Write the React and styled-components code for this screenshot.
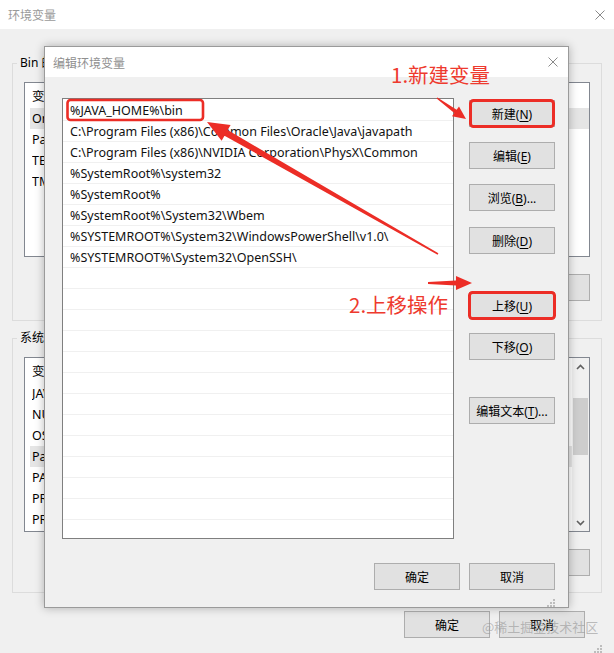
import React from 'react';
import styled, { createGlobalStyle } from 'styled-components';

const GlobalStyle = createGlobalStyle`
  html, body { margin: 0; padding: 0; }
  body {
    background: #f0f0f0;
    font-family: "Noto Sans", "Noto Sans CJK SC", sans-serif;
    font-size: 12px;
    color: #000;
  }
  * { box-sizing: border-box; }
`;

const Page = styled.div`
  position: relative;
  width: 614px;
  height: 653px;
  overflow: hidden;
`;

/* ---------- background window ---------- */
const Window = styled.div`
  width: 614px;
  height: 653px;
  background: #f0f0f0;
  display: flex;
  flex-direction: column;
`;

const TitleBar = styled.div`
  height: ${(p) => p.$h}px;
  flex: none;
  background: #fff;
  display: flex;
  align-items: center;
  padding-left: 8px;
  color: ${(p) => p.$color};
  font-family: "Noto Sans CJK SC", sans-serif;
  font-size: 12px;
`;

const TitleText = styled.span`
  flex: 1;
`;

const CloseBtn = styled.div`
  width: ${(p) => p.$w}px;
  height: 100%;
  display: flex;
  align-items: center;
  justify-content: center;
`;

const WinBody = styled.div`
  flex: 1;
  display: flex;
  flex-direction: column;
  padding: 27px 12px 0 12px;
`;

const GroupBox = styled.fieldset`
  margin: ${(p) => p.$mt}px 0 0 0;
  border: 1px solid #dcdcdc;
  padding: 12px 11px ${(p) => p.$pb}px 11px;
  min-width: 0;
`;

const Legend = styled.legend`
  padding: 0 3px;
  margin-left: -7px;
  font-size: 12px;
  line-height: 14px;
  font-family: "Noto Sans", "Noto Sans CJK SC", sans-serif;
`;

const ListView = styled.div`
  height: ${(p) => p.$h}px;
  background: #fff;
  border: 1px solid #828790;
  display: flex;
  overflow: hidden;
`;

const ListContent = styled.div`
  flex: 1;
  display: flex;
  flex-direction: column;
  font-size: 12.5px;
`;

const ListHeader = styled.div`
  height: 25px;
  flex: none;
  display: flex;
  align-items: center;
`;

const HeaderCell = styled.div`
  width: ${(p) => p.$w}px;
  padding-left: 7px;
`;

const ListRow = styled.div`
  height: 21px;
  flex: none;
  display: flex;
  align-items: center;
  margin-left: 5px;
  padding-left: 2px;
  background: ${(p) => (p.$selected ? '#e5e5e5' : 'transparent')};
`;

const Cell = styled.div`
  width: ${(p) => p.$w}px;
  white-space: nowrap;
  overflow: hidden;
`;

const ScrollBar = styled.div`
  width: 17px;
  flex: none;
  background: #f0f0f0;
  display: flex;
  flex-direction: column;
  align-items: center;
`;

const ScrollArrow = styled.div`
  height: 17px;
  width: 17px;
  display: flex;
  align-items: center;
  justify-content: center;
  margin-top: ${(p) => (p.$end ? 'auto' : '0')};
`;

const Thumb = styled.div`
  width: 15px;
  height: ${(p) => p.$h}px;
  margin-top: ${(p) => p.$top}px;
  background: #cdcdcd;
`;

const ButtonRow = styled.div`
  display: flex;
  justify-content: flex-end;
  gap: ${(p) => p.$gap}px;
  margin-top: ${(p) => p.$mt}px;
  padding-right: ${(p) => p.$pr || 0}px;
`;

const Btn = styled.button`
  width: 86px;
  height: 27px;
  margin: ${(p) => p.$mt || 0}px 0 0 0;
  padding: 0;
  flex: none;
  background: #e1e1e1;
  border: 1px solid #adadad;
  border-radius: 0;
  font-family: "Noto Sans", "Noto Sans CJK SC", sans-serif;
  font-size: 12px;
  color: #000;
  white-space: nowrap;
`;

const Mn = styled.span`
  text-decoration: underline;
  text-underline-offset: 2px;
`;

const GripRow = styled.div`
  margin-top: auto;
  display: flex;
  justify-content: flex-end;
  padding: 0 ${(p) => p.$pr}px ${(p) => p.$pb}px 0;
`;

/* ---------- dialog ---------- */
const Dialog = styled.div`
  position: absolute;
  left: 44px;
  top: 46px;
  width: 525px;
  height: 562px;
  border: 1px solid #9a9a9a;
  box-shadow: 0 0 9px rgba(0, 0, 0, 0.28);
  background: #f0f0f0;
  display: flex;
  flex-direction: column;
`;

const DialogBody = styled.div`
  flex: 1;
  display: flex;
  flex-direction: column;
  padding: 21px 13px 0 17px;
`;

const MainRow = styled.div`
  display: flex;
  gap: 15px;
  height: 441px;
`;

const PathList = styled.div`
  width: 392px;
  height: 441px;
  background: #fff;
  border: 1px solid #7f7f7f;
  padding-top: 1px;
  overflow: hidden;
`;

const PathRow = styled.div`
  height: 21px;
  border-bottom: 1px solid #f0f0f0;
  padding-left: 7px;
  line-height: 21px;
  white-space: nowrap;
  font-size: 12.5px;
  color: #111;
`;

const ButtonColumn = styled.div`
  width: 86px;
  display: flex;
  flex-direction: column;
  padding-top: 2px;
`;

/* ---------- annotations ---------- */
const Overlay = styled.svg`
  position: absolute;
  left: 0;
  top: 0;
  pointer-events: none;
`;

const Note = styled.span`
  position: absolute;
  left: ${(p) => p.$x}px;
  top: ${(p) => p.$y}px;
  font-family: "Noto Sans CJK SC", sans-serif;
  font-size: 20.5px;
  line-height: 24px;
  color: #ee3a2e;
  white-space: nowrap;
`;

const Watermark = styled.span`
  position: absolute;
  left: 482px;
  top: 617px;
  font-family: "Noto Sans CJK SC", sans-serif;
  font-size: 13px;
  line-height: 20px;
  color: rgba(150, 150, 150, 0.6);
  white-space: nowrap;
`;

const RED = '#ec2d26';

function arrowPoints([x1, y1], [x2, y2], headLen, headHalf, tailW, neckW) {
  const dx = x2 - x1;
  const dy = y2 - y1;
  const L = Math.hypot(dx, dy);
  const ux = dx / L;
  const uy = dy / L;
  const nx = -uy;
  const ny = ux;
  const bx = x2 - ux * headLen;
  const by = y2 - uy * headLen;
  const p = (x, y) => `${x.toFixed(1)},${y.toFixed(1)}`;
  return [
    p(x1 + (nx * tailW) / 2, y1 + (ny * tailW) / 2),
    p(bx + (nx * neckW) / 2, by + (ny * neckW) / 2),
    p(bx + nx * headHalf, by + ny * headHalf),
    p(x2, y2),
    p(bx - nx * headHalf, by - ny * headHalf),
    p(bx - (nx * neckW) / 2, by - (ny * neckW) / 2),
    p(x1 - (nx * tailW) / 2, y1 - (ny * tailW) / 2),
  ].join(' ');
}

const XIcon = ({ size = 10, color = '#777' }) => (
  <svg width={size} height={size} viewBox="0 0 10 10">
    <path d="M0.5 0.5 L9.5 9.5 M9.5 0.5 L0.5 9.5" stroke={color} strokeWidth="1" fill="none" />
  </svg>
);

const Chevron = ({ up }) => (
  <svg width="9" height="6" viewBox="0 0 9 6">
    <path
      d={up ? 'M1 5 L4.5 1.5 L8 5' : 'M1 1 L4.5 4.5 L8 1'}
      stroke="#606060"
      strokeWidth="1.6"
      fill="none"
    />
  </svg>
);

const Grip = () => (
  <svg width="8" height="8" viewBox="0 0 8 8">
    {[
      [6, 0],
      [3, 3],
      [6, 3],
      [0, 6],
      [3, 6],
      [6, 6],
    ].map(([x, y]) => (
      <rect key={`${x}-${y}`} x={x} y={y} width="2" height="2" fill="#bdbdbd" />
    ))}
  </svg>
);

const userVars = [
  { name: 'OneDrive', value: 'C:\\Users\\Bin\\OneDrive', selected: true },
  { name: 'Path', value: 'C:\\Users\\Bin\\AppData\\Local\\Microsoft\\WindowsApps;' },
  { name: 'TEMP', value: 'C:\\Users\\Bin\\AppData\\Local\\Temp' },
  { name: 'TMP', value: 'C:\\Users\\Bin\\AppData\\Local\\Temp' },
];

const sysVars = [
  { name: 'JAVA_HOME', value: 'C:\\Program Files\\Java\\jdk1.8.0' },
  { name: 'NUMBER_OF_PROCESSORS', value: '8' },
  { name: 'OS', value: 'Windows_NT' },
  { name: 'Path', value: '%JAVA_HOME%\\bin;C:\\Program Files (x86)\\...', selected: true },
  { name: 'PATHEXT', value: '.COM;.EXE;.BAT;.CMD;.VBS;.VBE;.JS;.JSE;.WSF;.WSH;.MSC' },
  { name: 'PROCESSOR_ARCHITECTURE', value: 'AMD64' },
  { name: 'PROCESSOR_IDENTIFIER', value: 'Intel64 Family 6 Model 158' },
];

const paths = [
  '%JAVA_HOME%\\bin',
  'C:\\Program Files (x86)\\Common Files\\Oracle\\Java\\javapath',
  'C:\\Program Files (x86)\\NVIDIA Corporation\\PhysX\\Common',
  '%SystemRoot%\\system32',
  '%SystemRoot%',
  '%SystemRoot%\\System32\\Wbem',
  '%SYSTEMROOT%\\System32\\WindowsPowerShell\\v1.0\\',
  '%SYSTEMROOT%\\System32\\OpenSSH\\',
];

const pathRows = [...paths, ...Array(21 - paths.length).fill('')];

const VarList = ({ items, height, scroll }) => (
  <ListView $h={height}>
    <ListContent>
      <ListHeader>
        <HeaderCell $w={170}>变量</HeaderCell>
        <HeaderCell $w={300}>值</HeaderCell>
      </ListHeader>
      {items.map((v) => (
        <ListRow key={v.name} $selected={v.selected}>
          <Cell $w={163}>{v.name}</Cell>
          <Cell $w={300}>{v.value}</Cell>
        </ListRow>
      ))}
    </ListContent>
    {scroll && (
      <ScrollBar>
        <ScrollArrow>
          <Chevron up />
        </ScrollArrow>
        <Thumb $top={23} $h={57} />
        <ScrollArrow $end>
          <Chevron />
        </ScrollArrow>
      </ScrollBar>
    )}
  </ListView>
);

export default function App() {
  return (
    <Page>
      <GlobalStyle />
      <Window>
        <TitleBar $h={29} $color="#9a9a9a">
          <TitleText>环境变量</TitleText>
          <CloseBtn $w={28}>
            <XIcon color="#8a8a8a" />
          </CloseBtn>
        </TitleBar>
        <WinBody>
          <GroupBox $mt={0} $pb={19}>
            <Legend>Bin 的用户变量(U)</Legend>
            <VarList items={userVars} height={175} />
            <ButtonRow $gap={10} $mt={17}>
              <Btn>新建(<Mn>N</Mn>)...</Btn>
              <Btn>编辑(<Mn>E</Mn>)...</Btn>
              <Btn>删除(<Mn>D</Mn>)</Btn>
            </ButtonRow>
          </GroupBox>
          <GroupBox $mt={10} $pb={16}>
            <Legend>系统变量(S)</Legend>
            <VarList items={sysVars} height={175} scroll />
            <ButtonRow $gap={10} $mt={17}>
              <Btn>新建(<Mn>W</Mn>)...</Btn>
              <Btn>编辑(<Mn>I</Mn>)...</Btn>
              <Btn>删除(<Mn>L</Mn>)</Btn>
            </ButtonRow>
          </GroupBox>
          <ButtonRow $gap={9} $mt={18} $pr={17}>
            <Btn>确定</Btn>
            <Btn>取消</Btn>
          </ButtonRow>
          <GripRow $pr={-10} $pb={2}>
            <Grip />
          </GripRow>
        </WinBody>
      </Window>

      <Dialog>
        <TitleBar $h={30} $color="#8f8f8f">
          <TitleText>编辑环境变量</TitleText>
          <CloseBtn $w={30}>
            <XIcon color="#8a8a8a" />
          </CloseBtn>
        </TitleBar>
        <DialogBody>
          <MainRow>
            <PathList>
              {pathRows.map((p, i) => (
                <PathRow key={i}>{p}</PathRow>
              ))}
            </PathList>
            <ButtonColumn>
              <Btn $mt={0}>新建(<Mn>N</Mn>)</Btn>
              <Btn $mt={15}>编辑(<Mn>E</Mn>)</Btn>
              <Btn $mt={15}>浏览(<Mn>B</Mn>)...</Btn>
              <Btn $mt={16}>删除(<Mn>D</Mn>)</Btn>
              <Btn $mt={38}>上移(<Mn>U</Mn>)</Btn>
              <Btn $mt={14}>下移(<Mn>O</Mn>)</Btn>
              <Btn $mt={37}>编辑文本(<Mn>T</Mn>)...</Btn>
            </ButtonColumn>
          </MainRow>
          <ButtonRow $gap={9} $mt={24}>
            <Btn>确定</Btn>
            <Btn>取消</Btn>
          </ButtonRow>
          <GripRow $pr={-11} $pb={2}>
            <Grip />
          </GripRow>
        </DialogBody>
      </Dialog>

      <Overlay width="614" height="653" viewBox="0 0 614 653">
        <rect x="67.5" y="100" width="135.5" height="20" rx="3" fill="none" stroke={RED} strokeWidth="2.6" />
        <rect x="470.5" y="100.5" width="83" height="26" rx="3" fill="none" stroke={RED} strokeWidth="3" />
        <rect x="469.5" y="292.5" width="85" height="26" rx="3" fill="none" stroke={RED} strokeWidth="3" />
        <polygon points={arrowPoints([437, 98], [466, 119], 13, 6, 1.5, 4)} fill={RED} />
        <polygon points={arrowPoints([428, 283], [472, 283], 16, 7, 2, 5)} fill={RED} />
        <polygon points={arrowPoints([438, 254], [207, 122], 22, 9, 1.5, 6.5)} fill={RED} />
      </Overlay>
      <Note $x={391} $y={62}>1.新建变量</Note>
      <Note $x={349} $y={292}>2.上移操作</Note>
      <Watermark>@稀土掘金技术社区</Watermark>
    </Page>
  );
}
